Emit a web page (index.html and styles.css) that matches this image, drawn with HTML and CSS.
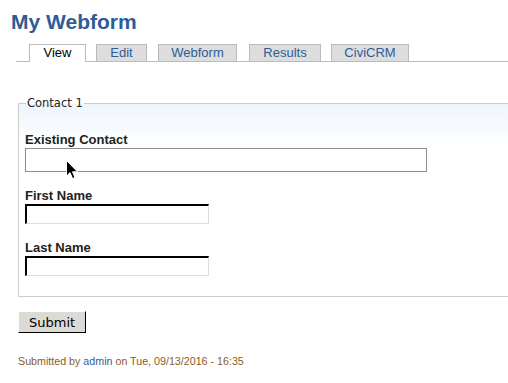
FILE: index.html
```html
<!DOCTYPE html>
<html>
<head>
    <title>My Webform</title>
    <link rel="stylesheet" href="styles.css">
</head>
<body>
    <h1 class="title">My Webform</h1>

    <ul class="tabs">
        <li class="active tab-view"><a href="#">View</a></li>
        <li class="tab-edit"><a href="#">Edit</a></li>
        <li class="tab-webform"><a href="#">Webform</a></li>
        <li class="tab-results"><a href="#">Results</a></li>
        <li class="tab-civicrm"><a href="#">CiviCRM</a></li>
    </ul>

    <form class="webform">
        <fieldset class="contact">
            <legend>Contact 1</legend>

            <div class="field">
                <label>Existing Contact</label>
                <input type="text" class="wide">
            </div>

            <div class="field">
                <label>First Name</label>
                <input type="text" class="short">
            </div>

            <div class="field">
                <label>Last Name</label>
                <input type="text" class="short">
            </div>
        </fieldset>

        <button type="button" class="submit">Submit</button>
    </form>

    <p class="submitted">Submitted by <a href="#">admin</a> on Tue, 09/13/2016 - 16:35</p>

    <!-- mouse pointer over the first input -->
    <svg class="cursor" width="13" height="21" viewBox="0 0 13 21">
        <path d="M0.5 0.5 L0.5 16 L4 12.6 L6.6 18.6 L9 17.6 L6.5 11.8 L11.5 11.8 Z" fill="#000" stroke="#fff" stroke-width="1"/>
    </svg>
</body>
</html>
```

FILE: styles.css
```css
body { margin: 0; font-family: "Liberation Sans", Arial, sans-serif; background: #fff; overflow: hidden; position: relative; }
a { text-decoration: none; color: #2e5c95; }

.title { margin: 10px 0 0 11px; font-size: 21px; font-weight: bold; color: #2e5c95; line-height: 24px; }

.tabs { list-style: none; display: flex; margin: 10px 0 0 16px; padding: 0 0 0 13px; border-bottom: 1px solid #bbb; }
.tabs li { border: 1px solid #bbb; border-bottom: none; background: #ddd; margin-right: 10px; text-align: center; }
.tabs li a { display: block; font-size: 13px; line-height: 15px; height: 15px; }
.tabs li.active { background: #fff; margin-bottom: -1px; height: 17px; }
.tabs li.active a { color: #000; }
.tab-view { width: 55px; }
.tab-edit { width: 49px; margin-right: 11px !important; }
.tab-webform { width: 77px; margin-right: 12px !important; }
.tab-results { width: 70px; }
.tab-civicrm { width: 76px; }

.webform { margin: 34px 0 0 18px; }

.contact { margin: 0 -30px 0 0; padding: 22px 6px 20px 6px; border: 1px solid #ccc; background: linear-gradient(#edf5fc, #fff 42px); font-family: "DejaVu Sans", sans-serif; }
.contact legend { font-size: 11.5px; color: #222; padding: 0 1px; margin-left: 1px; }

.field { margin-bottom: 16px; }
.field:last-child { margin-bottom: 0; }
.field label { display: block; font-family: "Liberation Sans", Arial, sans-serif; font-size: 13px; line-height: 15px; font-weight: bold; color: #222; margin-bottom: 1px; }
.field input { display: block; margin: 0; padding: 0; font-size: 12px; }
.field input.wide { width: 400px; height: 22px; border: 1px solid #8c8c8c; background: #fff; }
.field input.short { width: 181px; height: 17px; border: 2px inset #ddd; border-top-color: #000; border-left-color: #000; border-bottom: 1px solid #ddd; border-right: 1px solid #ddd; background: #fff; }

.submit { margin-top: 14px; padding: 0 10px; height: 22px; font-family: "DejaVu Sans", sans-serif; font-size: 13px; color: #000; background: #dcdad5; border: 1px solid; border-color: #fff #000 #000 #fff; }

.submitted { margin: 22px 0 0 18px; font-size: 10.7px; color: #8a5c26; }

.cursor { position: absolute; left: 66px; top: 160px; }
```
